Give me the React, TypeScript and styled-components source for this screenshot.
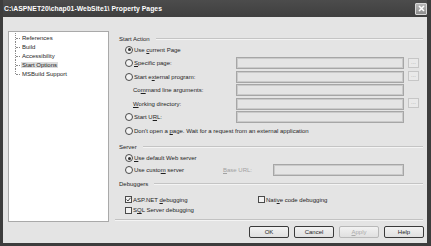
import React from 'react';
import styled, { createGlobalStyle } from 'styled-components';

const GlobalStyle = createGlobalStyle`
    html, body {
        margin: 0;
        padding: 0;
        background: #ffffff;
    }
    body {
        font-family: 'Liberation Sans', Arial, sans-serif;
        font-size: 6px;
        color: #1e1e1e;
    }
`;

const Window = styled('div')`
    width: 431px;
    height: 246px;
    box-sizing: border-box;
    padding: 0 4px 3px 3px;
    background: #3d3d3d;
    display: flex;
    flex-direction: column;
`;
const TitleBar = styled('div')`
    height: 17px;
    display: flex;
    align-items: center;
    padding-left: 1px;
    background: linear-gradient(#4c4c4c, #3f3f3f);
`;
const Title = styled('span')`
    color: #ffffff;
    font-weight: bold;
    font-size: 6.8px;
    letter-spacing: 0.05px;
`;
const CloseButton = styled('div')`
    margin-left: auto;
    width: 12px;
    height: 12px;
    box-sizing: border-box;
    border: 1px solid #d8d8d8;
    border-radius: 1px;
    background: linear-gradient(#b8b8b8, #8e8e8e);
    display: flex;
    align-items: center;
    justify-content: center;
`;
const Body = styled('div')`
    flex: 1;
    display: flex;
    background: #e4e4e4;
    padding: 14px 0 0 5px;
`;
const TreePanel = styled('div')`
    width: 101px;
    height: 191px;
    box-sizing: border-box;
    background: #ffffff;
    border: 1px solid #a9a9a9;
    padding-top: 1px;
`;
const TreeList = styled('div')`
    display: flex;
    flex-direction: column;
    padding-left: 6px;
`;
const TreeItem = styled('div')<{ selected?: boolean; last?: boolean }>`
    position: relative;
    height: 9px;
    display: flex;
    align-items: center;
    padding-left: 6px;
    &::before {
        content: '';
        position: absolute;
        left: 0;
        top: 0;
        height: ${(p) => (p.last ? '4.5px' : '9px')};
        border-left: 1px dotted #8a8a8a;
    }
    &::after {
        content: '';
        position: absolute;
        left: 1px;
        top: 4.5px;
        width: 4px;
        border-top: 1px dotted #8a8a8a;
    }
    span {
        padding: 0 1px;
        background: ${(p) => (p.selected ? '#dcdcdc' : 'transparent')};
    }
`;
const RightCol = styled('div')`
    flex: 1;
    margin-left: 6px;
    margin-right: 4px;
    display: flex;
    flex-direction: column;
`;
const GroupHeader = styled('div')<{ top: number }>`
    height: 8px;
    margin-top: ${(p) => p.top}px;
    display: flex;
    align-items: center;
    padding-left: 4px;
    &::after {
        content: '';
        flex: 1;
        margin: 0 0 0 6px;
        border-top: 1px solid #c4c4c4;
        border-bottom: 1px solid #f4f4f4;
    }
`;
const Row = styled('div')<{ h: number; indent: number; top?: number }>`
    height: ${(p) => p.h}px;
    margin-top: ${(p) => p.top || 0}px;
    display: flex;
    align-items: center;
    padding-left: ${(p) => p.indent}px;
`;
const Label = styled('div')<{ w?: number; disabled?: boolean }>`
    display: flex;
    align-items: center;
    width: ${(p) => (p.w ? `${p.w}px` : 'auto')};
    flex-shrink: 0;
    white-space: pre;
    color: ${(p) => (p.disabled ? '#a2a2a2' : '#1e1e1e')};
`;
const Text = styled('span')`
    white-space: pre;
`;
const Radio = styled('span')<{ checked?: boolean }>`
    width: 8px;
    height: 8px;
    box-sizing: border-box;
    border-radius: 50%;
    border: 1px solid #4a4a4a;
    background: #f2f2f2;
    margin-right: 1px;
    display: flex;
    align-items: center;
    justify-content: center;
    &::after {
        content: '';
        width: 3px;
        height: 3px;
        border-radius: 50%;
        background: ${(p) => (p.checked ? '#333333' : 'transparent')};
    }
`;
const Check = styled('span')`
    width: 7px;
    height: 7px;
    box-sizing: border-box;
    border: 1px solid #4a4a4a;
    background: #f2f2f2;
    margin-right: 1px;
    display: flex;
    align-items: center;
    justify-content: center;
`;
const TextBox = styled('div')<{ w: number }>`
    width: ${(p) => p.w}px;
    height: 12px;
    box-sizing: border-box;
    border: 1px solid #a6a6a6;
    box-shadow: inset 0 0 0 1px #cacaca;
    background: #e4e4e4;
    flex-shrink: 0;
`;
const Browse = styled('div')`
    width: 11px;
    height: 10px;
    margin-left: 4px;
    box-sizing: border-box;
    border: 1px solid #c6c6c6;
    background: #e9e9e9;
    color: #a8a8a8;
    font-size: 6px;
    line-height: 6px;
    text-align: center;
    align-self: flex-start;
    margin-top: 1px;
`;
const Separator = styled('div')`
    margin-top: 4px;
    border-top: 1px solid #c2c2c2;
    border-bottom: 1px solid #f4f4f4;
`;
const ButtonRow = styled('div')`
    margin-top: 5px;
    margin-right: -1px;
    display: flex;
    justify-content: flex-end;
    gap: 5px;
`;
const Button = styled('div')<{ disabled?: boolean }>`
    width: 40px;
    height: 12px;
    box-sizing: border-box;
    border: 1px solid ${(p) => (p.disabled ? '#b8b8b8' : '#3a3a3a')};
    border-radius: 2px;
    background: linear-gradient(#f2f2f2, #e0e0e0);
    color: ${(p) => (p.disabled ? '#aaaaaa' : '#1e1e1e')};
    display: flex;
    align-items: center;
    justify-content: center;
`;

const treeItems = ['References', 'Build', 'Accessibility', 'Start Options', 'MSBuild Support'];

export default function App() {
    return (
        <>
            <GlobalStyle />
            <Window>
                <TitleBar>
                    <Title>C:\ASPNET20\chap01-WebSite1\ Property Pages</Title>
                    <CloseButton>
                        <svg width="7" height="7" viewBox="0 0 7 7">
                            <path d="M1 1L6 6M6 1L1 6" stroke="#ffffff" strokeWidth="1.6" />
                        </svg>
                    </CloseButton>
                </TitleBar>
                <Body>
                    <TreePanel>
                        <TreeList>
                            {treeItems.map((item, i) => (
                                <TreeItem key={item} selected={item === 'Start Options'} last={i === treeItems.length - 1}>
                                    <span>{item}</span>
                                </TreeItem>
                            ))}
                        </TreeList>
                    </TreePanel>
                    <RightCol>
                        <GroupHeader top={4}>Start Action</GroupHeader>
                        <Row h={13.5} indent={10}>
                            <Label>
                                <Radio checked />
                                <Text>
                                    Use <u>c</u>urrent Page
                                </Text>
                            </Label>
                        </Row>
                        <Row h={13.5} indent={10}>
                            <Label w={111}>
                                <Radio />
                                <Text>
                                    <u>S</u>pecific page:
                                </Text>
                            </Label>
                            <TextBox w={168} />
                            <Browse>...</Browse>
                        </Row>
                        <Row h={13.5} indent={10}>
                            <Label w={111}>
                                <Radio />
                                <Text>
                                    Start e<u>x</u>ternal program:
                                </Text>
                            </Label>
                            <TextBox w={168} />
                            <Browse>...</Browse>
                        </Row>
                        <Row h={13.5} indent={18}>
                            <Label w={103}>
                                <Text>
                                    Co<u>m</u>mand line arguments:
                                </Text>
                            </Label>
                            <TextBox w={168} />
                        </Row>
                        <Row h={13.5} indent={18}>
                            <Label w={103}>
                                <Text>
                                    <u>W</u>orking directory:
                                </Text>
                            </Label>
                            <TextBox w={168} />
                            <Browse>...</Browse>
                        </Row>
                        <Row h={13.5} indent={10}>
                            <Label w={111}>
                                <Radio />
                                <Text>
                                    Start U<u>R</u>L:
                                </Text>
                            </Label>
                            <TextBox w={168} />
                        </Row>
                        <Row h={13.5} indent={10}>
                            <Label>
                                <Radio />
                                <Text>
                                    Don't open a <u>p</u>age. Wait for a request from an external application
                                </Text>
                            </Label>
                        </Row>
                        <GroupHeader top={5.5}>Server</GroupHeader>
                        <Row h={12} indent={10} top={1}>
                            <Label>
                                <Radio checked />
                                <Text>
                                    <u>U</u>se default Web server
                                </Text>
                            </Label>
                        </Row>
                        <Row h={12} indent={10}>
                            <Label w={98}>
                                <Radio />
                                <Text>
                                    Use custo<u>m</u> server
                                </Text>
                            </Label>
                            <Label w={50} disabled>
                                <Text>
                                    <u>B</u>ase URL:
                                </Text>
                            </Label>
                            <TextBox w={131} />
                        </Row>
                        <GroupHeader top={4}>Debuggers</GroupHeader>
                        <Row h={11} indent={10} top={6}>
                            <Label w={133}>
                                <Check>
                                    <svg width="5" height="5" viewBox="0 0 5 5">
                                        <path d="M0.5 2.5L2 4L4.5 0.8" stroke="#333333" strokeWidth="0.9" fill="none" />
                                    </svg>
                                </Check>
                                <Text>
                                    ASP.NET <u>d</u>ebugging
                                </Text>
                            </Label>
                            <Label>
                                <Check />
                                <Text>
                                    Nati<u>v</u>e code debugging
                                </Text>
                            </Label>
                        </Row>
                        <Row h={10} indent={10}>
                            <Label>
                                <Check />
                                <Text>
                                    S<u>Q</u>L Server debugging
                                </Text>
                            </Label>
                        </Row>
                        <Separator />
                        <ButtonRow>
                            <Button>OK</Button>
                            <Button>Cancel</Button>
                            <Button disabled>
                                <Text>
                                    <u>A</u>pply
                                </Text>
                            </Button>
                            <Button>Help</Button>
                        </ButtonRow>
                    </RightCol>
                </Body>
            </Window>
        </>
    );
}
